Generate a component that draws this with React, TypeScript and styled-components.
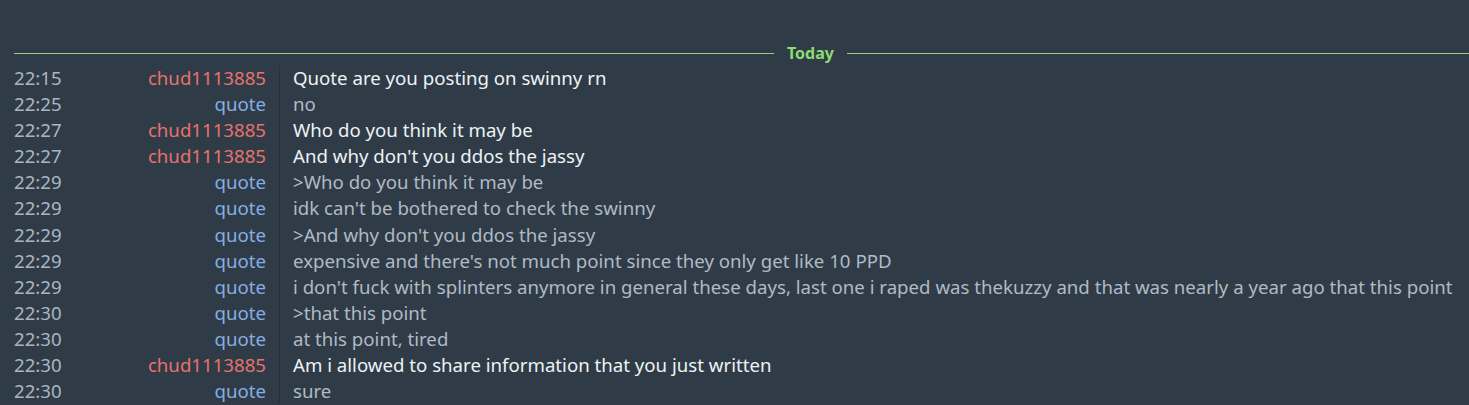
import React from "react";
import styled, { createGlobalStyle } from "styled-components";

type Msg = { time: string; nick: string; text: string };

const messages: Msg[] = [
  { time: "22:15", nick: "chud1113885", text: "Quote are you posting on swinny rn" },
  { time: "22:25", nick: "quote", text: "no" },
  { time: "22:27", nick: "chud1113885", text: "Who do you think it may be" },
  { time: "22:27", nick: "chud1113885", text: "And why don't you ddos the jassy" },
  { time: "22:29", nick: "quote", text: ">Who do you think it may be" },
  { time: "22:29", nick: "quote", text: "idk can't be bothered to check the swinny" },
  { time: "22:29", nick: "quote", text: ">And why don't you ddos the jassy" },
  { time: "22:29", nick: "quote", text: "expensive and there's not much point since they only get like 10 PPD" },
  {
    time: "22:29",
    nick: "quote",
    text: "i don't fuck with splinters anymore in general these days, last one i raped was thekuzzy and that was nearly a year ago that this point",
  },
  { time: "22:30", nick: "quote", text: ">that this point" },
  { time: "22:30", nick: "quote", text: "at this point, tired" },
  { time: "22:30", nick: "chud1113885", text: "Am i allowed to share information that you just written" },
  { time: "22:30", nick: "quote", text: "sure" },
];

const App = () => {
  return (
    <>
      <GlobalStyle />
      <Log>
        <DaySeparator>
          <Line fixed />
          <DayLabel>Today</DayLabel>
          <Line />
        </DaySeparator>
        {messages.map((m, i) => (
          <Row key={i}>
            <Time>{m.time}</Time>
            <Nick self={m.nick === "quote"}>{m.nick}</Nick>
            <Text self={m.nick === "quote"}>{m.text}</Text>
          </Row>
        ))}
      </Log>
    </>
  );
};

export default App;

const GlobalStyle = createGlobalStyle`
  html, body {
    margin: 0;
    padding: 0;
    background: #2f3c48;
    overflow: hidden;
  }
`;

const Log = styled.div`
  padding: 41px 0 0 14px;
  font-family: "Noto Sans", "Open Sans", sans-serif;
  font-size: 18.65px;
  height: 405px;
  box-sizing: border-box;
`;

const DaySeparator = styled.div`
  display: flex;
  align-items: center;
  height: 24px;
  gap: 13px;
`;

const Line = styled.div<{ fixed?: boolean }>`
  flex: ${(p) => (p.fixed ? "0 0 760px" : "1")};
  height: 1px;
  background: #93cf82;
`;

const DayLabel = styled.div`
  color: #8ddc72;
  font-weight: 700;
  font-size: 16px;
  line-height: 24px;
`;

const Row = styled.div`
  display: grid;
  grid-template-columns: 80px 185px 1fr;
  height: 26.1px;
  line-height: 26.1px;
  white-space: nowrap;
`;

const Time = styled.div`
  color: #aab5c0;
`;

const Nick = styled.div<{ self: boolean }>`
  color: ${(p) => (p.self ? "#87ade0" : "#e8716c")};
  text-align: right;
  padding-right: 13px;
`;

const Text = styled.div<{ self: boolean }>`
  color: ${(p) => (p.self ? "#b0bac4" : "#eef2f5")};
  border-left: 1px solid #26313b;
  padding-left: 13px;
`;
